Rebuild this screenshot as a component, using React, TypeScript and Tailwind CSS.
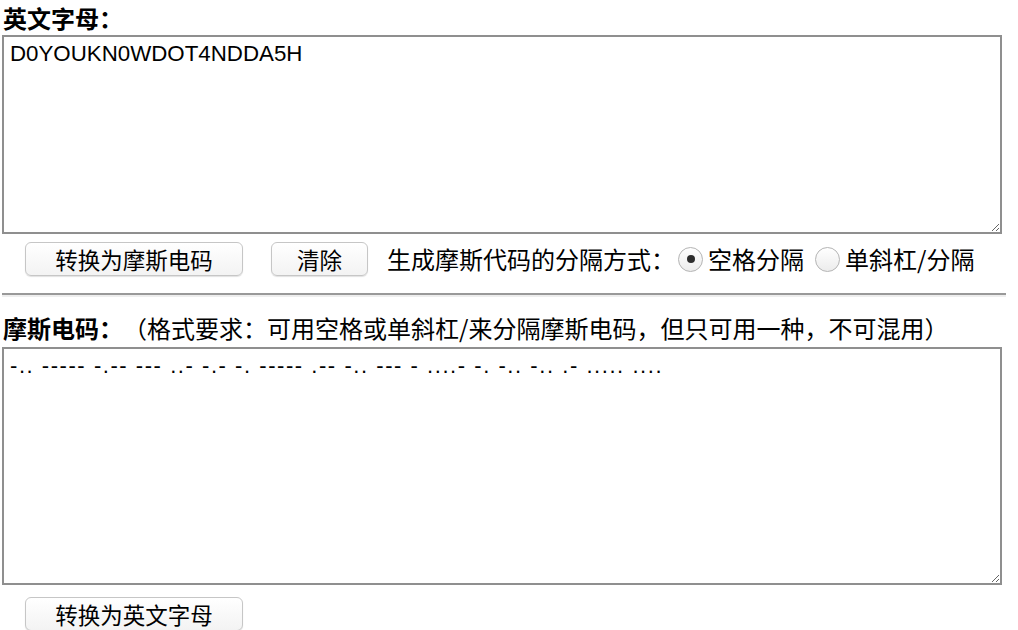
const morse = "-.. ----- -.-- --- ..- -.- -. ----- .-- -.. --- - ....- -. -.. -.. .- ..... ....";

const cjk = "font-['Noto_Sans_CJK_SC','Liberation_Sans',sans-serif] [text-spacing-trim:space-all]";
const latin = "font-['Liberation_Sans','Noto_Sans_CJK_SC',sans-serif]";

const Button = ({ label, width }: { label: string; width: string }) => (
  <button
    className={`${cjk} ${width} h-[34px] rounded-[6px] border border-[#c6c6c6] bg-gradient-to-b from-white to-[#f3f3f3] text-[22.5px] leading-none text-black shadow-[0_1px_1px_rgba(0,0,0,0.12)]`}
  >
    {label}
  </button>
);

const Radio = ({ checked, label }: { checked?: boolean; label: string }) => (
  <span className="flex items-center">
    <span className="flex h-[25px] w-[25px] items-center justify-center rounded-full border border-[#b4b4b4] bg-gradient-to-b from-white to-[#ececec]">
      {checked && <span className="h-[8px] w-[8px] rounded-full bg-[#2d2d2d]" />}
    </span>
    <span className="ml-[5px]">{label}</span>
  </span>
);

export default function App() {
  return (
    <div className={`${cjk} bg-white w-[1018px] h-[630px] overflow-hidden px-[2px] text-black`}>
      <div className="pt-[3px] text-[24px] leading-[29px] font-bold pl-[1px]">英文字母：</div>
      <textarea
        defaultValue="D0YOUKN0WDOT4NDDA5H"
        className={`${latin} mt-[3px] block w-[1000px] h-[199px] border-2 border-[#8f8f8f] px-[6px] py-[4px] text-[22.3px] leading-[26px] outline-none`}
      />
      <div className="mt-[8px] flex items-center h-[34px] text-[24px] leading-none">
        <div className="ml-[23px]">
          <Button label="转换为摩斯电码" width="w-[218px]" />
        </div>
        <div className="ml-[28px]">
          <Button label="清除" width="w-[97px]" />
        </div>
        <span className="ml-[19px]">生成摩斯代码的分隔方式：</span>
        <span className="ml-[3px] flex items-center gap-[11px]">
          <Radio checked label="空格分隔" />
          <Radio label="单斜杠/分隔" />
        </span>
      </div>
      <div className="mt-[17px] w-[1004px] border-t-2 border-b-2 border-t-[#999999] border-b-[#eeeeee]" />
      <div className="mt-[15px] text-[24px] leading-[32px] pl-[1px]">
        <span className="font-bold">摩斯电码：</span>
        <span>（格式要求：可用空格或单斜杠/来分隔摩斯电码，但只可用一种，不可混用）</span>
      </div>
      <textarea
        defaultValue={morse}
        className={`${latin} mt-[3px] block w-[1000px] h-[238px] border-2 border-[#8f8f8f] px-[6px] py-[4px] text-[22px] leading-[26px] tracking-[1.55px] outline-none`}
      />
      <div className="mt-[12px] ml-[23px]">
        <Button label="转换为英文字母" width="w-[218px]" />
      </div>
    </div>
  );
}
